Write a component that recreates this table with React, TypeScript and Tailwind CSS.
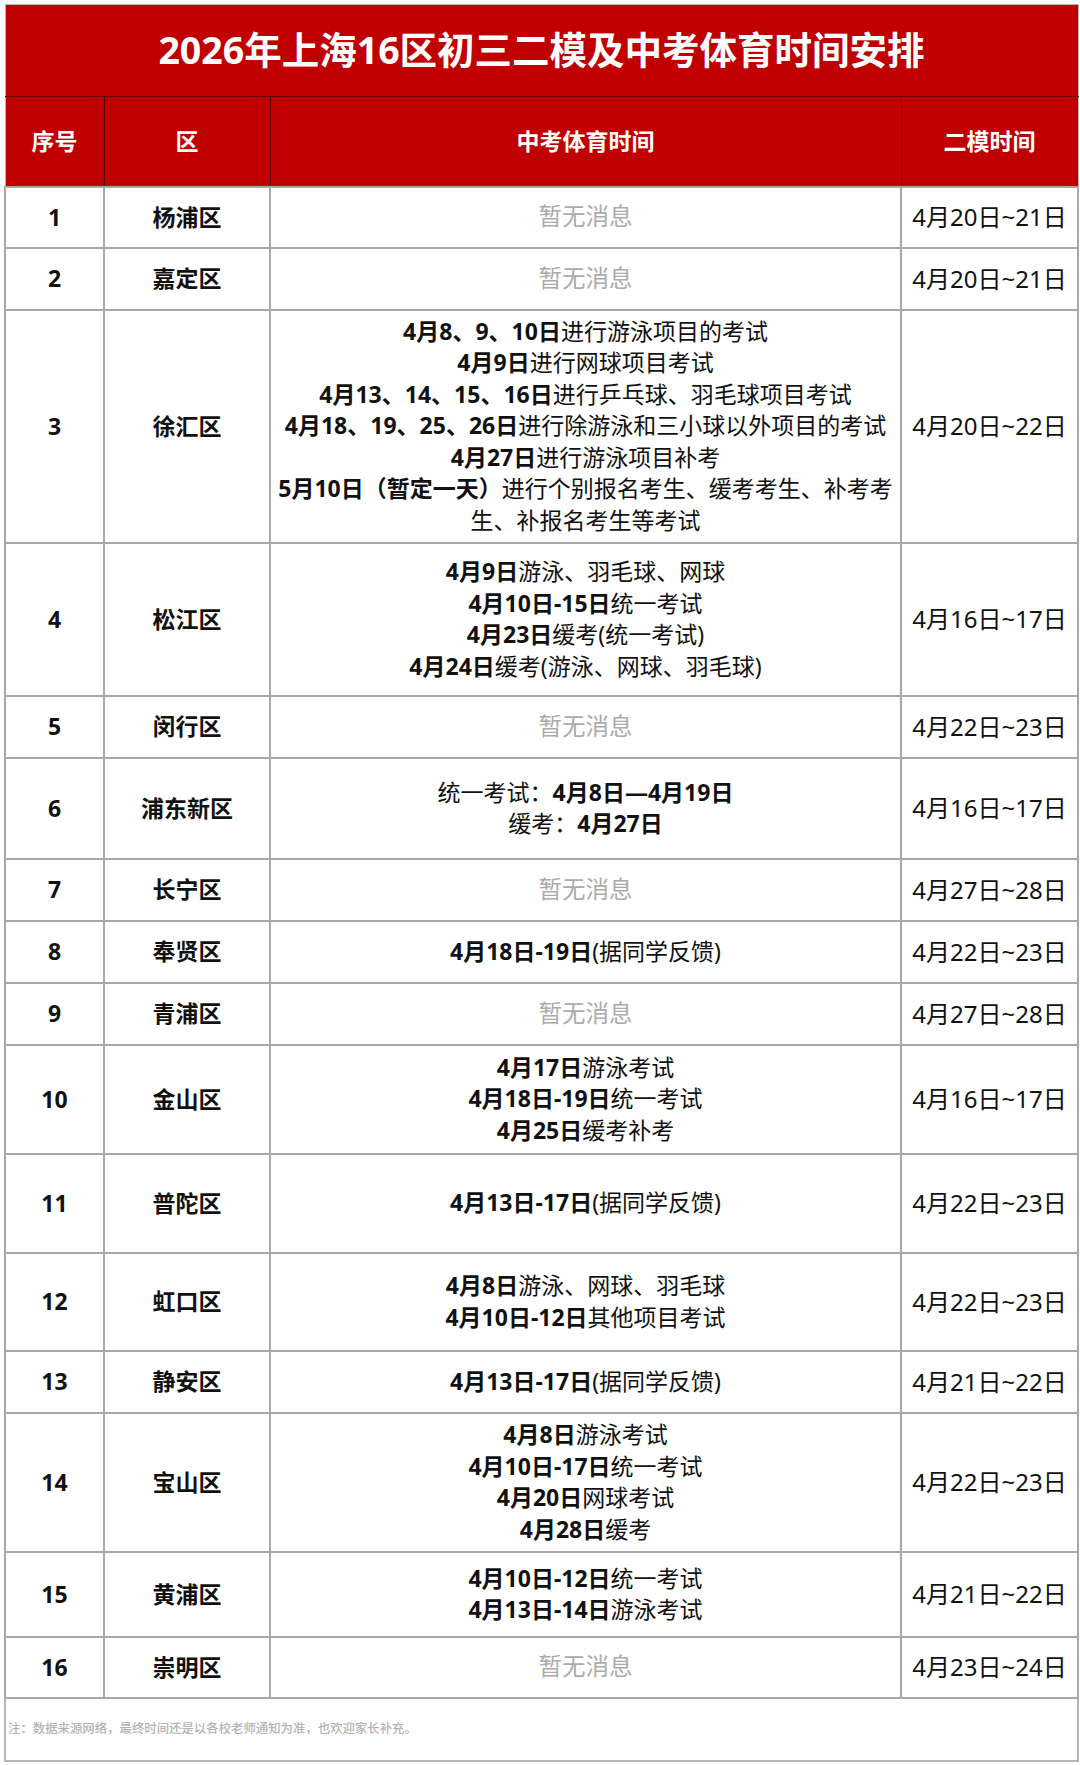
import React from 'react';

// 一行 = 一个区; sport 为 null 时显示"暂无消息"
type Seg = { b?: boolean; t: string };
type Row = { no: number; district: string; h: number; sport: Seg[][] | null; ermo: string };

const B = (t: string): Seg => ({ b: true, t });
const N = (t: string): Seg => ({ t });

const rows: Row[] = [
  { no: 1, district: '杨浦区', h: 61, sport: null, ermo: '4月20日~21日' },
  { no: 2, district: '嘉定区', h: 62, sport: null, ermo: '4月20日~21日' },
  {
    no: 3,
    district: '徐汇区',
    h: 233,
    sport: [
      [B('4月8、9、10日'), N('进行游泳项目的考试')],
      [B('4月9日'), N('进行网球项目考试')],
      [B('4月13、14、15、16日'), N('进行乒乓球、羽毛球项目考试')],
      [B('4月18、19、25、26日'), N('进行除游泳和三小球以外项目的考试')],
      [B('4月27日'), N('进行游泳项目补考')],
      [B('5月10日（暂定一天）'), N('进行个别报名考生、缓考考生、补考考')],
      [N('生、补报名考生等考试')],
    ],
    ermo: '4月20日~22日',
  },
  {
    no: 4,
    district: '松江区',
    h: 153,
    sport: [
      [B('4月9日'), N('游泳、羽毛球、网球')],
      [B('4月10日-15日'), N('统一考试')],
      [B('4月23日'), N('缓考(统一考试)')],
      [B('4月24日'), N('缓考(游泳、网球、羽毛球)')],
    ],
    ermo: '4月16日~17日',
  },
  { no: 5, district: '闵行区', h: 62, sport: null, ermo: '4月22日~23日' },
  {
    no: 6,
    district: '浦东新区',
    h: 101,
    sport: [
      [N('统一考试：'), B('4月8日—4月19日')],
      [N('缓考：'), B('4月27日')],
    ],
    ermo: '4月16日~17日',
  },
  { no: 7, district: '长宁区', h: 62, sport: null, ermo: '4月27日~28日' },
  { no: 8, district: '奉贤区', h: 62, sport: [[B('4月18日-19日'), N('(据同学反馈)')]], ermo: '4月22日~23日' },
  { no: 9, district: '青浦区', h: 62, sport: null, ermo: '4月27日~28日' },
  {
    no: 10,
    district: '金山区',
    h: 109,
    sport: [
      [B('4月17日'), N('游泳考试')],
      [B('4月18日-19日'), N('统一考试')],
      [B('4月25日'), N('缓考补考')],
    ],
    ermo: '4月16日~17日',
  },
  { no: 11, district: '普陀区', h: 99, sport: [[B('4月13日-17日'), N('(据同学反馈)')]], ermo: '4月22日~23日' },
  {
    no: 12,
    district: '虹口区',
    h: 98,
    sport: [
      [B('4月8日'), N('游泳、网球、羽毛球')],
      [B('4月10日-12日'), N('其他项目考试')],
    ],
    ermo: '4月22日~23日',
  },
  { no: 13, district: '静安区', h: 62, sport: [[B('4月13日-17日'), N('(据同学反馈)')]], ermo: '4月21日~22日' },
  {
    no: 14,
    district: '宝山区',
    h: 139,
    sport: [
      [B('4月8日'), N('游泳考试')],
      [B('4月10日-17日'), N('统一考试')],
      [B('4月20日'), N('网球考试')],
      [B('4月28日'), N('缓考')],
    ],
    ermo: '4月22日~23日',
  },
  {
    no: 15,
    district: '黄浦区',
    h: 85,
    sport: [
      [B('4月10日-12日'), N('统一考试')],
      [B('4月13日-14日'), N('游泳考试')],
    ],
    ermo: '4月21日~22日',
  },
  { no: 16, district: '崇明区', h: 61, sport: null, ermo: '4月23日~24日' },
];

function SportCell({ lines }: { lines: Seg[][] | null }) {
  if (!lines) {
    return <span className="text-[#ababab] text-[23.5px]">暂无消息</span>;
  }
  return (
    <div className="leading-[31.5px]">
      {lines.map((line, i) => (
        <div key={i}>
          {line.map((s, j) => (
            <span key={j} className={s.b ? 'font-bold' : ''}>
              {s.t}
            </span>
          ))}
        </div>
      ))}
    </div>
  );
}

export default function App() {
  return (
    <div
      className="w-[1080px] min-h-[1765px] bg-white pt-[4px] pl-[4px]"
      style={{ fontFamily: '"Noto Sans", "Noto Sans CJK SC", sans-serif' }}
    >
      <table className="w-[1073px] table-fixed border-collapse text-[23px] text-[#111]">
        <colgroup>
          <col className="w-[99px]" />
          <col className="w-[166px]" />
          <col className="w-[631px]" />
          <col className="w-[177px]" />
        </colgroup>
        <thead>
          <tr>
            <th
              colSpan={4}
              className="h-[92px] bg-[#c00000] border border-[#b5b5b5] border-b-[#5c0000] text-white text-[37.5px] font-bold"
            >
              2026年上海16区初三二模及中考体育时间安排
            </th>
          </tr>
          <tr className="bg-[#c00000] text-white text-[23px] font-bold">
            <th className="h-[90px] border border-[#5c0000] border-l-[#b5b5b5]">序号</th>
            <th className="border border-[#5c0000]">区</th>
            <th className="border border-[#5c0000]">中考体育时间</th>
            <th className="border border-[#5c0000] border-r-[#b5b5b5]">二模时间</th>
          </tr>
        </thead>
        <tbody>
          {rows.map((r) => (
            <tr key={r.no} style={{ height: r.h }}>
              <td className="border-2 border-[#a8a8a8] text-center font-bold">{r.no}</td>
              <td className="border-2 border-[#a8a8a8] text-center font-bold">{r.district}</td>
              <td className="border-2 border-[#a8a8a8] text-center px-[4px]">
                <SportCell lines={r.sport} />
              </td>
              <td className="border-2 border-[#a8a8a8] text-center whitespace-nowrap text-[24px]">{r.ermo}</td>
            </tr>
          ))}
          <tr>
            <td
              colSpan={4}
              className="h-[63px] border-2 border-[#b5b5b5] px-[2px] text-[12.4px] font-medium text-[#b3b3b3]"
            >
              注：数据来源网络，最终时间还是以各校老师通知为准，也欢迎家长补充。
            </td>
          </tr>
        </tbody>
      </table>
    </div>
  );
}
